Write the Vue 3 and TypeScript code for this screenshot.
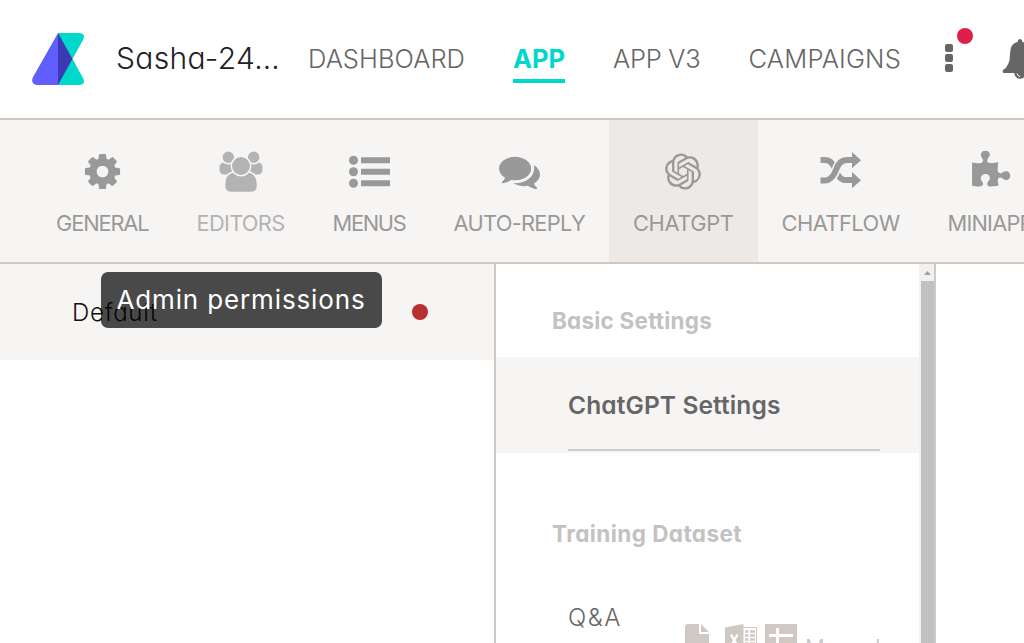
<script setup lang="ts">
import type { Directive } from 'vue'

interface Tab {
  id: string
  label: string
  width: number
}

const tabs: Tab[] = [
  { id: 'general', label: 'GENERAL', width: 92.5 },
  { id: 'editors', label: 'EDITORS', width: 88 },
  { id: 'menus', label: 'MENUS', width: 73 },
  { id: 'auto-reply', label: 'AUTO-REPLY', width: 131.5 },
  { id: 'chatgpt', label: 'CHATGPT', width: 100.6 },
  { id: 'chatflow', label: 'CHATFLOW', width: 118 },
  { id: 'miniapp', label: 'MINIAPP', width: 85 },
]

const links: Tab[] = [
  { id: 'dashboard', label: 'DASHBOARD', width: 157 },
  { id: 'app', label: 'APP', width: 52 },
  { id: 'app-v3', label: 'APP V3', width: 87.5 },
  { id: 'campaigns', label: 'CAMPAIGNS', width: 152.5 },
]

/* Tracks a label's letters so that it takes up the given width. */
const vFit: Directive<HTMLElement, number> = {
  mounted(el, { value }) {
    const count = (el.textContent ?? '').length
    const natural = el.getBoundingClientRect().width
    el.style.letterSpacing = `${((value - natural) / count).toFixed(3)}px`
  },
}
</script>

<template>
  <div class="page">
    <header class="header">
      <svg class="logo" viewBox="0 0 52 52">
        <path d="M26 0H48Q54 1 51 7L40.500 26L51 45Q54 51 48 52H26Z" fill="#00d8cc" />
        <path d="M26 0V52H5Q-1.500 51 .8 44.500Z" fill="#615eff" />
        <path d="M26 0L40.500 26L26 52Z" fill="#3c39b4" />
      </svg>
      <div class="bot"><span v-fit="164">Sasha-24…</span></div>
      <nav class="nav">
        <a v-for="l in links" :key="l.id" class="link" :class="{ current: l.id === 'app' }">
          <span v-fit="l.width">{{ l.label }}</span>
        </a>
      </nav>
      <div class="more">
        <i></i><i></i><i></i>
        <b class="alert"></b>
      </div>
      <svg class="bell" viewBox="0 0 36 40">
        <path d="M18 0Q20 0 20.500 3Q29 4.500 29 15Q29 27 35 31Q36 34 34 34H2Q0 34 1 31Q8 27 8 15Q8 4.500 15.500 3Q16 0 18 0Z" fill="#666" />
        <path d="M13 34A5 5 0 0 0 23 34Z" fill="#666" stroke="#666" stroke-width="1.500" />
        <path d="M15 34.500Q15.500 37 18 37.500" fill="none" stroke="#fff" stroke-width="1" />
      </svg>
    </header>

    <div class="tabs">
      <div v-for="t in tabs" :key="t.id" class="tab" :class="{ active: t.id === 'chatgpt', muted: t.id === 'editors' }">
        <svg v-if="t.id === 'general'" class="icon" viewBox="0 0 1792 1792">
          <path d="M1152 896q0-106-75-181t-181-75-181 75-75 181 75 181 181 75 181-75 75-181zm512-109v222q0 12-8 23t-20 13l-185 28q-19 54-39 91 35 50 107 138 10 12 10 25t-9 23q-27 37-99 108t-94 71q-12 0-26-9l-138-108q-44 23-91 38-16 136-29 186-7 28-36 28h-222q-14 0-24.500-8.500t-11.500-21.500l-28-184q-49-16-90-37l-141 107q-10 9-25 9-14 0-25-11-126-114-165-168-7-10-7-23 0-12 8-23 15-21 51-66.500t54-70.500q-27-50-41-99l-183-27q-13-2-21-12.500t-8-23.500v-222q0-12 8-23t19-13l186-28q14-46 39-92-40-57-107-138-10-12-10-24 0-10 9-23 26-36 98.500-107.500t94.500-71.500q13 0 26 10l138 107q44-23 91-38 16-136 29-186 7-28 36-28h222q14 0 24.500 8.500t11.500 21.500l28 184q49 16 90 37l142-107q9-9 24-9 13 0 25 10 129 119 165 170 7 8 7 22 0 12-8 23-15 21-51 66.500t-54 70.500q26 50 41 98l183 28q13 2 21 12.500t8 23.500z" />
        </svg>
        <svg v-else-if="t.id === 'editors'" class="icon wide" viewBox="0 0 44 41">
          <rect x=".5" y="11.500" width="16" height="12" rx="4.500" />
          <rect x="27.500" y="11.500" width="16" height="12" rx="4.500" />
          <g class="cut">
            <circle cx="9.300" cy="6.300" r="6.500" />
            <circle cx="34.700" cy="6.300" r="6.500" />
            <path d="M14 21H30Q38.500 22.500 38.500 34.500Q38.500 41.500 32 41.500H12Q5.500 41.500 5.500 34.500Q5.500 22.500 14 21Z" />
            <circle cx="22" cy="15" r="9.700" />
          </g>
        </svg>
        <svg v-else-if="t.id === 'menus'" class="icon" viewBox="0 0 41 41">
          <circle cx="4.500" cy="9.300" r="4.500" /><circle cx="4.500" cy="20.800" r="4.500" /><circle cx="4.500" cy="32.300" r="4.500" />
          <rect x="12" y="6.300" width="29" height="6" rx=".6" /><rect x="12" y="17.800" width="29" height="6" rx=".6" /><rect x="12" y="29.300" width="29" height="6" rx=".6" />
        </svg>
        <svg v-else-if="t.id === 'auto-reply'" class="icon" viewBox="0 0 1792 1792">
          <path d="M1408 768q0 139-94 257t-256.500 186.500-353.500 68.500q-86 0-176-16-124 88-278 128-36 9-86 16h-3q-11 0-20.500-8t-11.500-21q-1-3-1-6.500t.5-6.500 2-6l2.500-5 3.500-5.500 4-5 4.500-5 4-4.500q5-6 23-25t26-29.500 22.500-29 25-38.500 20.500-44q-124-72-195-177t-71-224q0-139 94-257t256.500-186.500 353.500-68.500 353.500 68.500 256.500 186.500 94 257zm384 256q0 120-71 224.500t-195 176.500q10 24 20.500 44t25 38.500 22.500 29 26 29.500 23 25q1 1 4 4.500t4.500 5 4 5 3.500 5.500l2.500 5 2 6 .5 6.500-1 6.500q-3 14-13 22t-22 7q-50-7-86-16-154-40-278-128-90 16-176 16-271 0-472-132 58 4 88 4 161 0 309-45t264-129q125-92 192-212t67-254q0-77-23-152 129 71 204 178t75 230z" />
        </svg>
        <svg v-else-if="t.id === 'chatgpt'" class="icon gpt" viewBox="0 0 24 24">
          <path d="M22.2819 9.8211a5.9847 5.9847 0 0 0-.5157-4.9108 6.0462 6.0462 0 0 0-6.5098-2.9A6.0651 6.0651 0 0 0 4.9807 4.1818a5.9847 5.9847 0 0 0-3.9977 2.9 6.0462 6.0462 0 0 0 .7427 7.0966 5.98 5.98 0 0 0 .511 4.9107 6.051 6.051 0 0 0 6.5146 2.9001A5.9847 5.9847 0 0 0 13.2599 24a6.0557 6.0557 0 0 0 5.7718-4.2058 5.9894 5.9894 0 0 0 3.9977-2.9001 6.0557 6.0557 0 0 0-.7475-7.0729zm-9.022 12.6081a4.4755 4.4755 0 0 1-2.8764-1.0408l.1419-.0804 4.7783-2.7582a.7948.7948 0 0 0 .3927-.6813v-6.7369l2.02 1.1686a.071.071 0 0 1 .038.052v5.5826a4.504 4.504 0 0 1-4.4945 4.4944zm-9.6607-4.1254a4.4708 4.4708 0 0 1-.5346-3.0137l.142.0852 4.783 2.7582a.7712.7712 0 0 0 .7806 0l5.8428-3.3685v2.3324a.0804.0804 0 0 1-.0332.0615L9.74 19.9502a4.4992 4.4992 0 0 1-6.1408-1.6464zM2.3408 7.8956a4.485 4.485 0 0 1 2.3655-1.9728V11.6a.7664.7664 0 0 0 .3879.6765l5.8144 3.3543-2.0201 1.1685a.0757.0757 0 0 1-.071 0l-4.8303-2.7865A4.504 4.504 0 0 1 2.3408 7.872zm16.5963 3.8558L13.1038 8.364 15.1192 7.2a.0757.0757 0 0 1 .071 0l4.8303 2.7913a4.4944 4.4944 0 0 1-.6765 8.1042v-5.6772a.79.79 0 0 0-.407-.667zm2.0107-3.0231l-.142-.0852-4.7735-2.7818a.7759.7759 0 0 0-.7854 0L9.409 9.2297V6.8974a.0662.0662 0 0 1 .0284-.0615l4.8303-2.7866a4.4992 4.4992 0 0 1 6.6802 4.66zM8.3065 12.863l-2.02-1.1638a.0804.0804 0 0 1-.038-.0567V6.0742a4.4992 4.4992 0 0 1 7.3757-3.4537l-.142.0805L8.704 5.459a.7948.7948 0 0 0-.3927.6813zm1.0976-2.3654l2.602-1.4998 2.6069 1.4998v2.9994l-2.5974 1.4997-2.6067-1.4997Z" />
        </svg>
        <svg v-else-if="t.id === 'chatflow'" class="icon" viewBox="0 0 41 41">
          <path class="line" d="M.5 9H5Q11 9 14.500 16.500Q18 27.500 24 29H33" />
          <path class="line gap" d="M8 30Q13 28 16 19Q19 10 25 9" />
          <path class="line" d="M.5 29.500H5Q12 29.500 16 19Q19 9 27 9H33" />
          <path d="M32 1L41 9.300L32 17.300ZM32 21L41 29.300L32 37.300Z" />
        </svg>
        <svg v-else class="icon" viewBox="0 0 1792 1792">
          <path d="M1755 1083q0 81-44.500 135t-123.500 54q-41 0-77.500-17.500t-59-38-56.500-38-71-17.500q-110 0-110 124 0 39 16 115t15 115v5q-22 0-33 1-34 3-97.500 11.500t-115.500 13.500-98 5q-61 0-103-26.500t-42-83.500q0-37 17.500-71t38-56.500 38-59 17.500-77.500q0-79-54-123.500t-135-44.500q-84 0-143 45.500t-59 127.500q0 43 15 83t33.500 64.500 33.500 53 15 50.500q0 45-46 89-37 35-117 35-95 0-245-24-9-2-27.500-4t-27.500-4l-13-2q-1 0-3-1-2 0-2-1v-1024q2 1 17.500 3.500t34 5 21.500 3.500q150 24 245 24 80 0 117-35 46-44 46-89 0-22-15-50.500t-33.500-53-33.500-64.500-15-83q0-82 59-127.500t144-45.500q80 0 134 44.500t54 123.500q0 41-17.500 77.500t-38 59-38 56.500-17.500 71q0 57 42 83.500t103 26.500q64 0 180-15t163-17v2q-1 2-3.500 17.500t-5 34-3.500 21.500q-24 150-24 245 0 80 35 117 44 46 89 46 22 0 50.500-15t53-33.500 64.500-33.500 83-15q82 0 127.500 59t45.500 143z" />
        </svg>
        <div class="caption"><span v-fit="t.width">{{ t.label }}</span></div>
      </div>
    </div>

    <main class="body">
      <section class="bots">
        <div class="bot-row">
          <span v-fit="86">Default</span>
          <i class="status"></i>
        </div>
      </section>
      <section class="settings">
        <div class="list">
          <h3 class="group"><span v-fit="160">Basic Settings</span></h3>
          <div class="entry selected"><span v-fit="212.5">ChatGPT Settings</span></div>
          <h3 class="group second"><span v-fit="190">Training Dataset</span></h3>
          <div class="entry qa">
            <span v-fit="54">Q&amp;A</span>
            <div class="sources">
              <svg class="file" viewBox="0 0 24 32">
                <path d="M3 0H14V10H24V32H0V3Q0 0 3 0ZM16 0L24 8H16Z" />
              </svg>
              <svg class="sheet" viewBox="0 0 32 32">
                <path d="M0 3.500L18.500 0V32L0 28.500Z" />
                <path d="M18 3.500H31.500V28.500H18" class="frame" />
                <path d="M20 7.500H23.500M25 7.500H30M20 11.500H23.500M25 11.500H30M20 15.500H23.500M25 15.500H30M20 19.500H23.500M25 19.500H30" class="rows" />
                <path d="M6 10.500L12.500 22M12.500 10.500L6 22" class="cross" />
              </svg>
              <svg class="sheet" viewBox="0 0 32 32">
                <path d="M0 0H32V32H0Z" />
                <path d="M4 11.500H28M12.500 4V28" class="grid" />
              </svg>
              <span class="manual"><span v-fit="75">Manual</span></span>
            </div>
          </div>
        </div>
        <div class="scrollbar">
          <svg class="up" viewBox="0 0 7 4"><path d="M3.500 0L7 4H0Z" /></svg>
          <div class="thumb"></div>
        </div>
      </section>
    </main>

    <div class="tooltip"><span v-fit="249">Admin permissions</span></div>
  </div>
</template>

<style>
html,
body {
  overflow: hidden;
}
</style>

<style scoped>
.page {
  position: relative;
  width: 1024px;
  height: 643px;
  overflow: hidden;
  display: flex;
  flex-direction: column;
  background: #fff;
  color: #666;
  font-family: Inter, 'Liberation Sans', sans-serif;
  font-feature-settings: 'cv11', 'ss03';
  white-space: nowrap;
}
.page * {
  box-sizing: border-box;
}
svg {
  display: block;
  flex: none;
}
.header {
  flex: none;
  display: flex;
  align-items: center;
  height: 120px;
  padding-left: 32px;
  border-bottom: 2px solid #d0c8c2;
}
.logo {
  width: 52px;
  height: 52px;
}
.bot {
  flex: none;
  width: 192px;
  height: 60px;
  margin: -2px 0 0 32px;
  color: #212121;
  font-size: 30px;
  font-weight: 350;
  line-height: 60px;
}
.nav {
  flex: none;
  display: flex;
  gap: 48px;
  height: 48px;
  font-size: 25.500px;
  font-weight: 350;
  line-height: 48px;
}
.link {
  flex: none;
}
.current {
  color: #00d8cc;
  font-weight: 750;
  border-bottom: 4px solid #00d8cc;
}
.more {
  position: relative;
  flex: none;
  display: flex;
  flex-direction: column;
  gap: 2px;
  width: 8px;
  margin: -2px 0 0 44px;
}
.more i {
  height: 8px;
  border-radius: 2px;
  background: #666;
}
.alert {
  position: absolute;
  left: 12px;
  top: -16px;
  width: 16px;
  height: 16px;
  border-radius: 50%;
  background: #dc2049;
}
.bell {
  width: 36px;
  height: 40px;
  margin-left: 49px;
}
.tabs {
  flex: none;
  display: flex;
  height: 144px;
  padding-left: 32px;
  background: #f7f5f4;
  border-bottom: 2px solid #d0c8c2;
  color: #999;
}
.tab {
  flex: none;
  display: flex;
  flex-direction: column;
  align-items: center;
  padding: 31px 24px 0;
}
.active {
  background: #ede9e6;
}
.muted {
  color: #b3b3b3;
}
.icon {
  width: 41px;
  height: 41px;
  fill: currentColor;
}
.wide {
  width: 44px;
}
.cut {
  stroke: #f7f5f4;
  stroke-width: 1.500px;
}
.gpt {
  width: 36px;
  padding: 2px 0;
}
.line {
  fill: none;
  stroke: currentColor;
  stroke-width: 6px;
}
.gap {
  stroke: #f7f5f4;
  stroke-width: 9px;
}
.caption {
  margin-top: 15px;
  font-size: 21.800px;
  font-weight: 370;
  line-height: 32px;
}
.body {
  flex: 1;
  display: flex;
  min-height: 0;
}
.bots {
  width: 496px;
  border-right: 2px solid #d0c8c2;
}
.bot-row {
  display: flex;
  align-items: center;
  justify-content: space-between;
  height: 96px;
  padding: 0 66px 0 72px;
  background: #f7f5f4;
  color: #111;
  font-size: 24px;
  font-weight: 340;
}
.status {
  width: 16px;
  height: 16px;
  border-radius: 50%;
  background: #b92e2e;
}
.settings {
  display: flex;
  width: 440px;
  border-right: 2px solid #d0c8c2;
}
.list {
  width: 423px;
}
.group {
  height: 93px;
  margin: 0;
  padding: 40px 0 0 56px;
  color: #c2c2c2;
  font-size: 22.500px;
  font-weight: 720;
  line-height: 33px;
}
.second {
  height: 117px;
  padding-top: 64px;
}
.entry {
  height: 96px;
  padding-left: 72px;
  font-size: 24px;
  font-weight: 350;
  line-height: 96px;
}
.selected {
  position: relative;
  background: #f7f5f4;
  font-size: 24.500px;
  font-weight: 600;
}
.selected::after {
  content: '';
  position: absolute;
  left: 72px;
  bottom: 2px;
  width: 312px;
  height: 2px;
  background: #ccc;
}
.qa {
  display: flex;
}
.sources {
  display: flex;
  gap: 8px;
  padding-top: 54px;
  margin-left: 63px;
  fill: #d0c8c2;
  color: #c2c2c2;
  font-size: 22px;
  line-height: 46px;
}
.file {
  width: 24px;
  height: 32px;
  margin-right: 8px;
}
.sheet {
  width: 32px;
  height: 32px;
}
.frame {
  fill: none;
  stroke: #d0c8c2;
}
.rows {
  stroke: #d0c8c2;
  stroke-width: 2.500px;
}
.cross {
  stroke: #fff;
  stroke-width: 2.200px;
}
.grid {
  stroke: #fff;
  stroke-width: 3px;
}
.scrollbar {
  width: 15px;
  padding: 7px 0 0 2px;
  background: #f1f1f1;
}
.up {
  width: 7px;
  height: 4px;
  margin: 0 0 6px 3px;
  fill: #a0a0a0;
}
.thumb {
  height: 400px;
  background: #c1c1c1;
}
.tooltip {
  position: absolute;
  left: 100.500px;
  top: 272px;
  width: 281px;
  height: 56px;
  padding-left: 16px;
  border-radius: 7px;
  background: rgba(0, 0, 0, 0.7);
  color: #fff;
  font-size: 26px;
  line-height: 56px;
}
</style>
